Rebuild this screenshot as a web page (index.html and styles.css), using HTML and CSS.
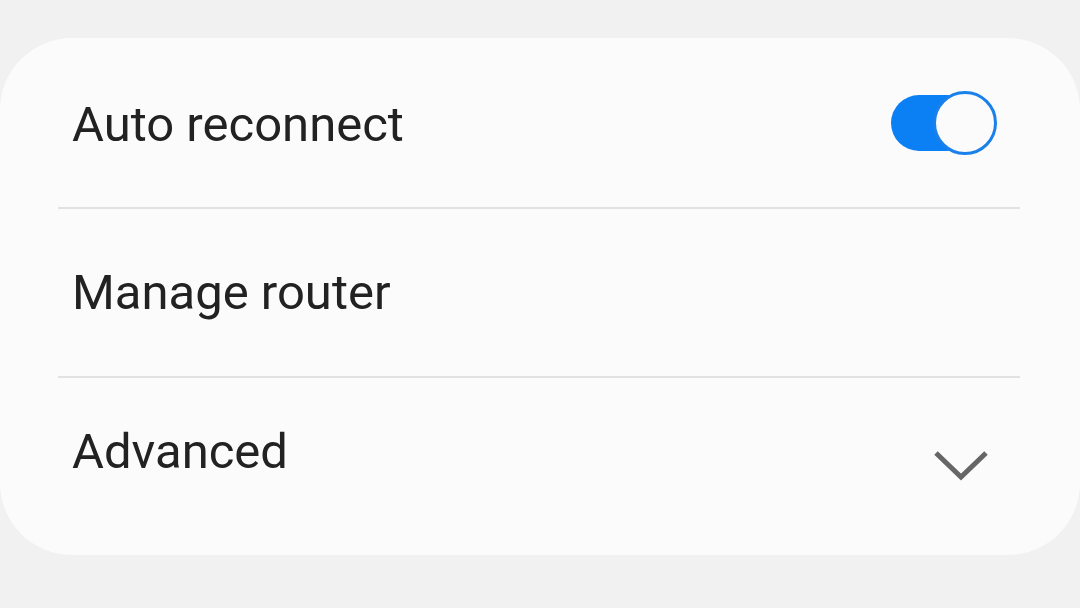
FILE: index.html
```html
<!DOCTYPE html>
<html lang="en">
<head>
    <meta charset="UTF-8">
    <meta name="viewport" content="width=device-width, initial-scale=1.0">
    <title>Wi-Fi settings</title>
    <link rel="stylesheet" href="styles.css">
</head>
<body>
    <div class="card">
        <div class="row row-first">
            <span class="label">Auto reconnect</span>
            <div class="toggle">
                <div class="track"></div>
                <div class="thumb"></div>
            </div>
        </div>
        <div class="divider"></div>
        <div class="row row-middle">
            <span class="label">Manage router</span>
        </div>
        <div class="divider"></div>
        <div class="row row-last">
            <span class="label">Advanced</span>
            <svg class="chevron" width="56" height="38" viewBox="0 0 56 38">
                <polyline points="3,6 28,30 53,6" fill="none" stroke="#666" stroke-width="5"/>
            </svg>
        </div>
    </div>
</body>
</html>
```

FILE: styles.css
```css
body {
    margin: 0;
    background-color: #f1f1f1;
    font-family: Roboto, "Noto Sans", sans-serif;
    height: 608px;
    overflow: hidden;
}
.card {
    margin-top: 38px;
    height: 517px;
    background-color: #fbfbfb;
    border-radius: 72px;
    display: flex;
    flex-direction: column;
}
.row {
    display: flex;
    justify-content: space-between;
    padding: 0 83px 0 72px;
}
.row-first {
    height: 169px;
    align-items: center;
}
.row-first .label {
    align-self: flex-start;
    margin-top: 59px;
}
.row-middle {
    height: 167px;
    align-items: center;
}
.row-last {
    flex: 1;
    align-items: flex-start;
    padding-top: 46px;
    padding-right: 91px;
}
.label {
    font-size: 49px;
    line-height: 56px;
    color: #222;
}
.divider {
    height: 2px;
    margin: 0 60px 0 58px;
    background-color: #e2e2e2;
}
.toggle {
    position: relative;
    width: 106px;
    height: 64px;
}
.track {
    position: absolute;
    left: 0;
    top: 4px;
    width: 84px;
    height: 56px;
    border-radius: 28px;
    background-color: #0b7ff4;
}
.thumb {
    position: absolute;
    right: 0;
    top: 0;
    width: 64px;
    height: 64px;
    box-sizing: border-box;
    border: 3.5px solid #1a80ea;
    border-radius: 50%;
    background-color: #fbfbfb;
}
.chevron {
    margin-top: 23px;
}
```
